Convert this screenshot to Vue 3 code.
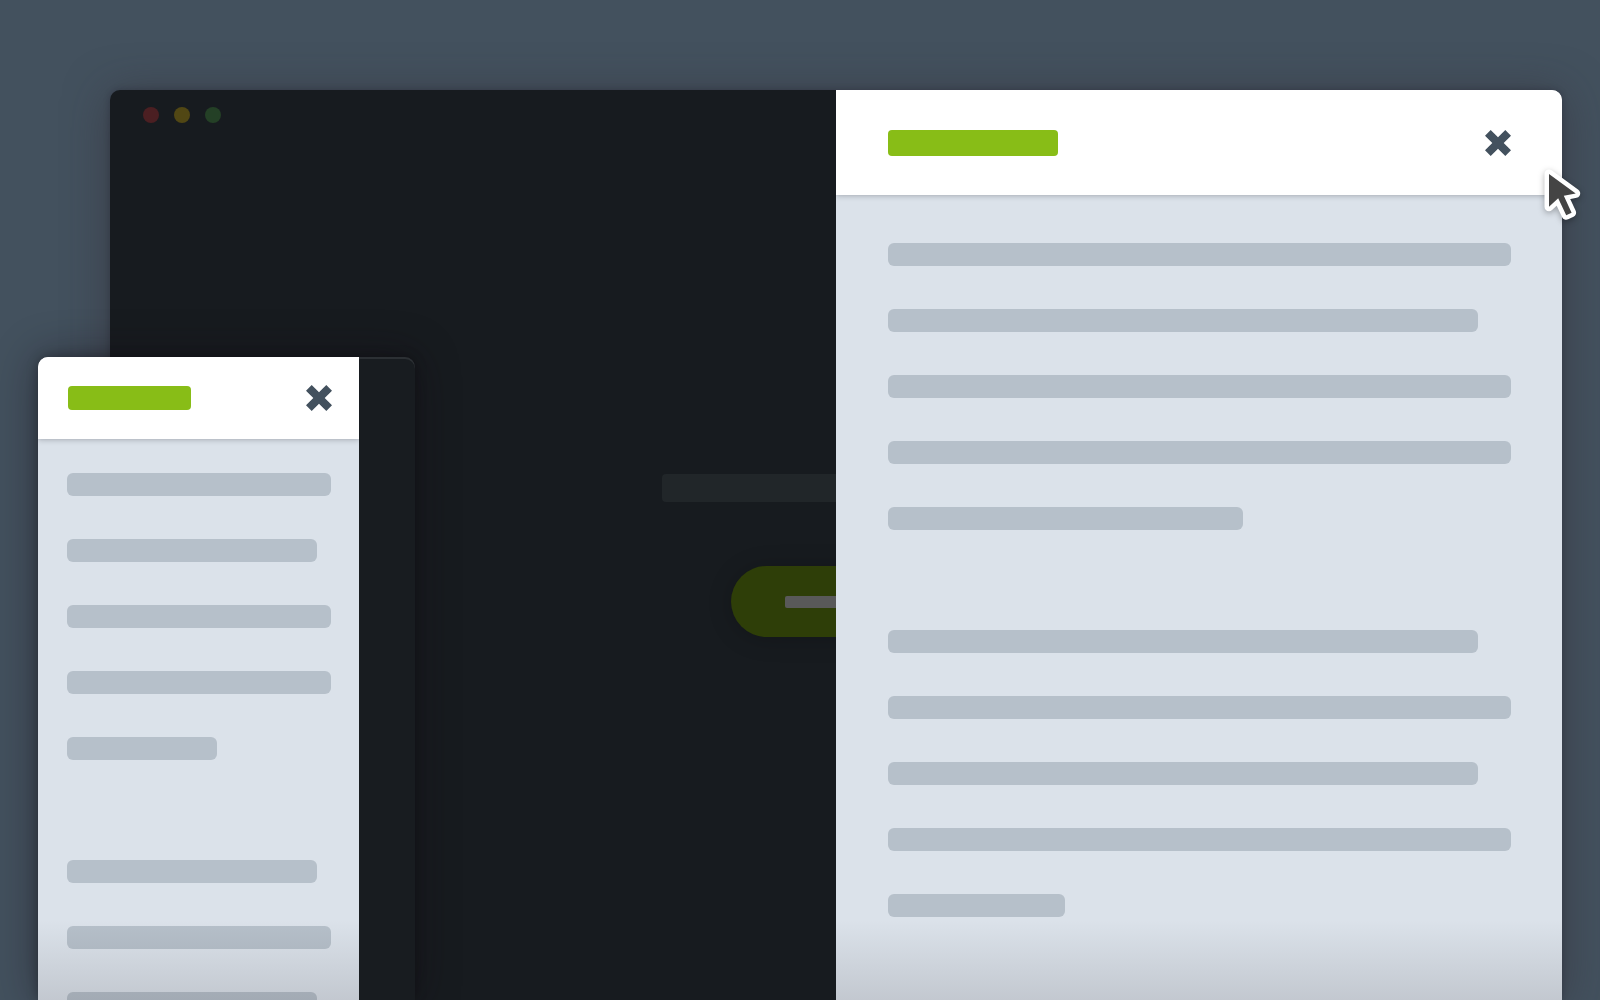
<script setup>
const groups = [
  [100, 94.7, 100, 100, 57],
  [94.7, 100, 94.7, 100, 28.4],
]
</script>

<template>
  <main class="stage">
    <section class="window" aria-label="Desktop preview">
      <div class="screen">
        <div class="dots"><span class="dot red"></span><span class="dot yellow"></span><span class="dot green"></span></div>
        <div class="hero">
          <span class="headline"></span>
          <button class="pill" type="button" aria-label="Open panel"><span class="pill-label"></span></button>
        </div>
      </div>
      <aside class="panel">
        <header class="head">
          <span class="title"></span>
          <button class="close" type="button" aria-label="Close desktop panel">
            <svg viewBox="0 0 26 26"><path d="M5.7 0 13 7.3 20.3 0 26 5.7 18.7 13 26 20.3 20.3 26 13 18.7 5.7 26 0 20.3 7.3 13 0 5.7Z" /></svg>
          </button>
        </header>
        <div class="body">
          <div v-for="(group, g) in groups" :key="g" class="group">
            <span v-for="(w, i) in group" :key="i" class="line" :style="{ width: w + '%' }"></span>
          </div>
        </div>
      </aside>
      <svg class="cursor" viewBox="0 0 50 60" aria-hidden="true">
        <path d="M10 10V42.7L19.2 34.3 27.2 51.3 32.6 48.7 24.8 31.8 36.7 29.4Z" />
        <path class="arrow" d="M10 10V42.7L19.2 34.3 27.2 51.3 32.6 48.7 24.8 31.8 36.7 29.4Z" />
      </svg>
    </section>

    <section class="phone" aria-label="Mobile preview">
      <aside class="panel">
        <header class="head">
          <span class="title"></span>
          <button class="close" type="button" aria-label="Close mobile panel">
            <svg viewBox="0 0 26 26"><path d="M5.7 0 13 7.3 20.3 0 26 5.7 18.7 13 26 20.3 20.3 26 13 18.7 5.7 26 0 20.3 7.3 13 0 5.7Z" /></svg>
          </button>
        </header>
        <div class="body">
          <div v-for="(group, g) in groups" :key="g" class="group">
            <span v-for="(w, i) in group" :key="i" class="line" :style="{ width: w + '%' }"></span>
          </div>
        </div>
      </aside>
    </section>
  </main>
</template>

<style>
body {
  margin: 0;
  background: #43515e;
}
</style>

<style scoped>
* {
  box-sizing: border-box;
}
button {
  border: 0;
  padding: 0;
  cursor: pointer;
}
.stage {
  position: relative;
  display: flex;
  height: 100vh;
  padding: 90px 38px 0 110px;
  overflow: hidden;
  background: #43515e;
  font-family: "Liberation Sans", sans-serif;
}
.window {
  position: relative;
  display: flex;
  flex: 1;
  border-radius: 10px 10px 0 0;
  background: #171b1f;
  box-shadow: 0 4px 44px rgba(50, 42, 50, 0.5), 0 0 6px rgba(20, 20, 35, 0.3);
}
.screen {
  display: flex;
  flex-direction: column;
  width: 50%;
  overflow: hidden;
  border-top-left-radius: 10px;
}
.dots {
  display: flex;
  gap: 15px;
  padding: 17px 33px;
}
.dot {
  width: 16px;
  height: 16px;
  border-radius: 50%;
}
.red {
  background: #4b1f22;
}
.yellow {
  background: #514714;
}
.green {
  background: #244026;
}
.hero {
  display: flex;
  flex-direction: column;
  align-items: center;
  gap: 64px;
  width: 200%;
  padding-top: 334px;
}
.headline {
  width: 348px;
  height: 28px;
  border-radius: 4px;
  background: #212629;
}
.pill {
  display: flex;
  align-items: center;
  justify-content: center;
  width: 210px;
  height: 71px;
  border-radius: 36px;
  background: #2e3e08;
  box-shadow: 0 2px 24px rgba(0, 0, 0, 0.2);
}
.pill-label {
  width: 102px;
  height: 12px;
  border-radius: 2px;
  background: #595959;
}
.panel {
  position: relative;
  display: flex;
  flex-direction: column;
  width: 50%;
  overflow: hidden;
  border-top-right-radius: 10px;
  background: #dbe2ea;
}
.panel::after {
  content: "";
  position: absolute;
  inset: auto 0 0;
  height: 80px;
  background: linear-gradient(rgba(20, 14, 20, 0), rgba(20, 14, 20, 0.12));
}
.head {
  display: flex;
  flex: none;
  align-items: center;
  justify-content: space-between;
  height: 105px;
  padding: 0 51px 0 52px;
  background: #fff;
  box-shadow: 0 0 6px rgba(20, 20, 30, 0.35);
}
.title {
  width: 170px;
  height: 26px;
  border-radius: 4px;
  background: #88bd17;
}
.close {
  width: 26px;
  height: 26px;
  background: none;
}
.close svg {
  display: block;
  fill: #43515e;
}
.body {
  display: flex;
  flex-direction: column;
  gap: 100px;
  padding: 48px 51px 0 52px;
}
.group {
  display: flex;
  flex-direction: column;
  gap: 43px;
}
.line {
  height: 23px;
  border-radius: 6px;
  background: #b6c0ca;
}
.phone {
  position: absolute;
  top: 357px;
  bottom: 0;
  left: 38px;
  display: flex;
  width: 377px;
  border-radius: 10px 10px 0 0;
  background: #181c20;
  box-shadow: inset 0 2px #2c3034, 0 0 44px rgba(20, 10, 20, 0.45), 0 0 12px rgba(0, 0, 0, 0.3);
}
.phone .panel {
  width: 321px;
  border-radius: 10px 0 0;
}
.phone .head {
  height: 82px;
  padding: 0 27px 0 30px;
}
.phone .title {
  width: 123px;
  height: 24px;
}
.phone .body {
  padding: 34px 28px 0 29px;
}
.cursor {
  position: absolute;
  top: 74px;
  right: -27px;
  width: 50px;
  height: 60px;
  overflow: visible;
  fill: #fff;
  stroke: #fff;
  stroke-width: 9;
  stroke-linejoin: round;
  filter: drop-shadow(0 2px 3px rgba(0, 0, 0, 0.3));
}
.cursor .arrow {
  fill: #444;
  stroke: none;
}
</style>
